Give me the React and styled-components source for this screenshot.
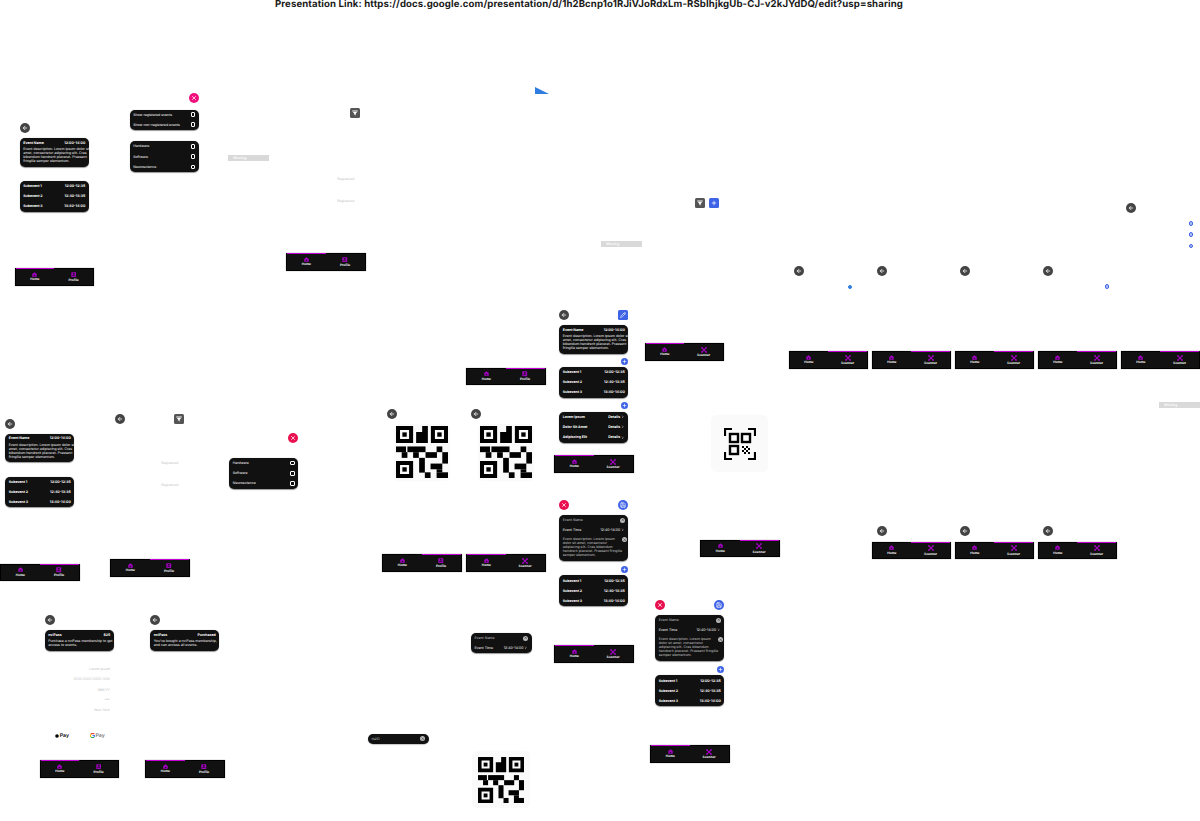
import React from 'react'
import styled, { createGlobalStyle, css } from 'styled-components'
import { ArrowLeft, X, Pencil, Plus, Save, ChevronRight } from 'lucide-react'

const GlobalStyle = createGlobalStyle`
  html, body {
    margin: 0;
    background: #ffffff;
    font-family: 'Inter', 'Liberation Sans', sans-serif;
    text-rendering: geometricPrecision;
    overflow: hidden;
  }
`

// the page is a design board: artboards sit where they were dropped, inside them it's flow
const at = css`
  position: absolute;
  left: ${p => p.$x}px;
  top: ${p => p.$y}px;
`

const Board = styled.div`
  position: relative;
  width: 1200px;
  height: 821px;
  overflow: hidden;
  background: #ffffff;
`

const LinkLine = styled.div`
  ${at}
  font-size: 9.6px;
  line-height: 10px;
  font-weight: 700;
  letter-spacing: 0.115px;
  white-space: nowrap;
  color: #1a1a1a;
`

const Artboard = styled.section`
  ${at}
  display: flex;
  flex-direction: column;
  width: 79.5px;
  height: 172px;
`

const Spot = styled.div`
  ${at}
  width: ${p => (p.$w ? `${p.$w}px` : 'auto')};
`

const Body = styled.div`
  flex: 1;
  display: flex;
  flex-direction: column;
  padding: 0 5.25px;
`

const Header = styled.header`
  display: flex;
  justify-content: space-between;
  align-items: center;
  height: 10px;
  margin-top: ${p => p.$top ?? 9.5}px;
`

const Actions = styled.div`
  display: flex;
  gap: 3.8px;
  margin-left: auto;
`

const Stack = styled.div`
  display: flex;
  flex-direction: column;
  gap: ${p => p.$gap ?? 14.5}px;
  margin-top: ${p => p.$top ?? 5}px;
`

const Card = styled.div`
  box-sizing: border-box;
  padding: ${p => p.$pad || '0 3.5px'};
  background: #111111;
  border-radius: 5px;
  box-shadow: 0 0.5px 1px rgba(0, 0, 0, 0.4);
  color: #ffffff;
  font-size: 3.5px;
`

const Row = styled.div`
  display: flex;
  align-items: center;
  justify-content: space-between;
  height: ${p => p.$h || 10.2}px;
  font-weight: ${p => (p.$bold ? 700 : 400)};
  color: ${p => (p.$dim ? '#c4c4c4' : '#ffffff')};
  white-space: nowrap;
`

const Desc = styled.div`
  line-height: 4px;
  color: ${p => (p.$dim ? '#c4c4c4' : '#f4f4f4')};
  white-space: pre;
`

const DescRow = styled.div`
  display: flex;
  align-items: flex-start;
  justify-content: space-between;
  padding-top: 1.5px;
`

const Value = styled.span`
  display: inline-flex;
  align-items: center;
  gap: 1px;
`

const Check = styled.span`
  flex: none;
  box-sizing: border-box;
  width: 4.6px;
  height: 4.6px;
  border: 0.5px solid #ffffff;
  border-radius: 1px;
`

const Clear = styled.span`
  display: inline-flex;
  flex: none;
  align-items: center;
  justify-content: center;
  width: 5px;
  height: 5px;
  border-radius: 50%;
  background: #b9b9b9;
  color: #222222;
`

const Round = styled.button`
  display: flex;
  flex: none;
  align-items: center;
  justify-content: center;
  width: 10px;
  height: 10px;
  padding: 0;
  border: none;
  border-radius: ${p => (p.$square ? '1.5px' : '50%')};
  background: ${p => p.$bg || '#444444'};
  color: #ffffff;
`

const AddButton = styled(Round)`
  align-self: flex-end;
  width: 7px;
  height: 7px;
  margin: ${p => p.$m};
  background: #3f63e6;
`

const DotColumn = styled.div`
  display: flex;
  flex-direction: column;
  align-self: flex-end;
  gap: 6.6px;
  margin: 8.3px 1.5px 0 0;
`

const Dot = styled.span`
  box-sizing: border-box;
  display: block;
  width: 4.6px;
  height: 4.6px;
  border-radius: 50%;
  background: #b4c2f5;
  border: 1.5px solid #3f63e6;
`

// sits on top of the artboard, it's a hotspot marker and not part of the flow
const Pin = styled(Dot)`
  ${at}
  background: ${p => (p.$solid ? '#2f7de0' : '#b4c2f5')};
  border-color: ${p => (p.$solid ? '#2f7de0' : '#3f63e6')};
`

const Nav = styled.nav`
  display: flex;
  flex: none;
  box-sizing: border-box;
  height: 17.5px;
  background: #111111;
  border: solid #000000;
  border-width: 0 1px 1px 1px;
  box-shadow: 0 0 1px rgba(0, 0, 0, 0.45);
`

const Tab = styled.div`
  flex: 1;
  display: flex;
  flex-direction: column;
  align-items: center;
  gap: 0.6px;
  padding-top: 2.6px;
  box-sizing: border-box;
  border-top: 1.2px solid ${p => (p.$active ? '#c400d8' : '#000000')};
  color: #a200c0;
`

const TabLabel = styled.span`
  font-size: 3.2px;
  line-height: 4px;
  font-weight: 700;
  color: #ffffff;
`

const Tag = styled.div`
  ${at}
  width: 41px;
  height: 6px;
  padding-left: 5px;
  box-sizing: border-box;
  background: #d9d9d9;
  color: #ffffff;
  font-size: 3.3px;
  font-weight: 600;
  line-height: 6px;
`

const FaintList = styled.div`
  display: flex;
  flex-direction: column;
  align-items: flex-end;
  gap: ${p => p.$gap}px;
  margin-top: ${p => p.$top}px;
  padding-right: ${p => p.$right ?? 1}px;
  font-size: 3.4px;
  line-height: 4px;
  color: #c4c4c4;
  white-space: nowrap;
`

const PayRow = styled.div`
  display: flex;
  align-items: center;
  gap: 21px;
  margin-top: 20.5px;
  padding-left: 10.5px;
`

const PayMark = styled.div`
  display: flex;
  align-items: center;
  gap: 0.5px;
  font-size: 5.2px;
  line-height: 6px;
  font-weight: 600;
  color: ${p => p.$color};
`

const CodeBox = styled.div`
  display: flex;
  align-items: center;
  justify-content: center;
  align-self: center;
  flex: none;
  width: ${p => p.$w}px;
  height: ${p => p.$h}px;
  background: #fafafa;
  border-radius: 5px;
`

const Triangle = styled.svg`
  ${at}
`

const HomeIcon = () => (
  <svg width="5" height="5" viewBox="0 0 10 10" fill="currentColor">
    <path d="M5 0.5 9.5 4.2V9.5H0.5V4.2Z" />
    <rect x="3.6" y="5.6" width="2.8" height="2" fill="#111111" />
  </svg>
)

const ProfileIcon = () => (
  <svg width="5.5" height="5.5" viewBox="0 0 10 10" fill="currentColor">
    <rect x="0.5" y="0.5" width="9" height="9" rx="1.2" />
    <rect x="3.4" y="2" width="3.2" height="2.6" fill="#111111" />
    <rect x="2" y="6.2" width="6" height="1.2" fill="#111111" />
  </svg>
)

const ScanIcon = () => (
  <svg width="6" height="6" viewBox="0 0 10 10" fill="none" stroke="currentColor" strokeWidth="2">
    <path d="M1 1 9 9M9 1 1 9" />
    <path d="M0.5 3V0.5H3M7 0.5H9.5V3M9.5 7V9.5H7M3 9.5H0.5V7" strokeWidth="1.2" />
  </svg>
)

const FilterIcon = () => (
  <svg width="6" height="6" viewBox="0 0 10 10" fill="#ffffff">
    <path d="M0.5 1H9.5V2.4H0.5ZM1.6 3.4H8.4L6 6.6V9L4 8V6.6Z" />
  </svg>
)

const Qr = ({ size }) => (
  <svg width={size} height={size} viewBox="0 0 155 155" fill="#000000">
    {[[0, 0], [104, 0], [0, 104]].map(([x, y]) => (
      <g key={`${x}-${y}`}>
        <path fillRule="evenodd" d={`M${x} ${y}h51v51h-51zM${x + 12} ${y + 12}v27h27v-27z`} />
        <rect x={x + 19} y={y + 19} width="13" height="13" />
      </g>
    ))}
    <path d="M78 0H95V51H60V18H78Z" />
    <rect x="0" y="61" width="30" height="17" />
    <rect x="17" y="78" width="17" height="17" />
    <rect x="34" y="61" width="54" height="17" />
    <rect x="51" y="78" width="17" height="17" />
    <rect x="88" y="78" width="34" height="17" />
    <rect x="121" y="61" width="17" height="17" />
    <rect x="138" y="78" width="17" height="34" />
    <rect x="69" y="95" width="17" height="44" />
    <rect x="86" y="138" width="17" height="17" />
    <rect x="103" y="112" width="35" height="17" />
    <rect x="121" y="129" width="17" height="9" />
    <rect x="121" y="138" width="34" height="17" />
  </svg>
)

const ScanQr = () => (
  <svg width="32" height="32" viewBox="0 0 32 32">
    <path d="M1 8V1H8M24 1H31V8M31 24V31H24M8 31H1V24" fill="none" stroke="#000000" strokeWidth="2.2" />
    <g fill="none" stroke="#000000" strokeWidth="2.4">
      <rect x="6" y="6" width="8" height="8" />
      <rect x="18" y="6" width="8" height="8" />
      <rect x="6" y="18" width="8" height="8" />
    </g>
    <g fill="#000000">
      {[[18, 18], [22, 18], [20, 20], [24, 20], [18, 22], [22, 22], [20, 24], [24, 24]].map(([x, y]) => (
        <rect key={`${x}-${y}`} x={x} y={y} width="2" height="2" />
      ))}
    </g>
  </svg>
)

const Back = () => (
  <Round>
    <ArrowLeft size={6} strokeWidth={3} />
  </Round>
)

const Close = ({ bg = '#e8104f' }) => (
  <Round $bg={bg}>
    <X size={6} strokeWidth={3} />
  </Round>
)

const SaveBtn = () => (
  <Round $bg="#3f63e6">
    <Save size={6} strokeWidth={2.5} />
  </Round>
)

const Add = ({ m }) => (
  <AddButton $m={m}>
    <Plus size={5} strokeWidth={3} />
  </AddButton>
)

const FilterBtn = () => (
  <Round $square $bg="#555555">
    <FilterIcon />
  </Round>
)

const BottomNav = ({ active, second }) => (
  <Nav>
    <Tab $active={active === 0}>
      <HomeIcon />
      <TabLabel>Home</TabLabel>
    </Tab>
    <Tab $active={active === 1}>
      {second === 'Profile' ? <ProfileIcon /> : <ScanIcon />}
      <TabLabel>{second}</TabLabel>
    </Tab>
  </Nav>
)

const EventCard = ({ time = '12:00-14:00' }) => (
  <Card $pad="0 3.5px 3.5px">
    <Row $bold $h={9}>
      <span>Event Name</span>
      <span>{time}</span>
    </Row>
    <Desc>
      {'Event description. Lorem ipsum dolor sit\namet, consectetur adipiscing elit. Cras\nbibendum hendrerit placerat. Praesent\nfringilla semper elementum.'}
    </Desc>
  </Card>
)

const SubeventCard = () => (
  <Card $pad="0 3.5px 0.4px">
    <Row $bold>
      <span>Subevent 1</span>
      <span>12:00-12:35</span>
    </Row>
    <Row $bold>
      <span>Subevent 2</span>
      <span>12:40-13:35</span>
    </Row>
    <Row $bold>
      <span>Subevent 3</span>
      <span>13:40-14:00</span>
    </Row>
  </Card>
)

const TopicsCard = () => (
  <Card>
    {['Hardware', 'Software', 'Neuroscience'].map(t => (
      <Row key={t}>
        <span>{t}</span>
        <Check />
      </Row>
    ))}
  </Card>
)

const DetailsCard = () => (
  <Card $pad="0 3.5px 0.4px">
    {['Lorem Ipsum', 'Dolor Sit Amet', 'Adipiscing Elit'].map(t => (
      <Row key={t} $bold>
        <span>{t}</span>
        <Value>
          Details
          <ChevronRight size={3.6} strokeWidth={3} />
        </Value>
      </Row>
    ))}
  </Card>
)

const NameRow = ({ children }) => (
  <Row $dim>
    <span>{children}</span>
    <Clear><X size={3.5} strokeWidth={3} /></Clear>
  </Row>
)

const TimeRow = () => (
  <Row>
    <span>Event Time</span>
    <Value>
      12:40-14:00
      <ChevronRight size={3.6} strokeWidth={3} />
    </Value>
  </Row>
)

const EditCard = () => (
  <Card $pad="0 3.5px 4.6px">
    <NameRow>Event Name</NameRow>
    <TimeRow />
    <DescRow>
      <Desc $dim>
        {'Event description. Lorem ipsum\ndolor sit amet, consectetur\nadipiscing elit. Cras bibendum\nhendrerit placerat. Praesent fringilla\nsemper elementum.'}
      </Desc>
      <Clear><X size={3.5} strokeWidth={3} /></Clear>
    </DescRow>
  </Card>
)

const PassCard = ({ value, children }) => (
  <Card $pad="0 3.5px 3.5px">
    <Row $bold $h={9}>
      <span>nviPass</span>
      <span>{value}</span>
    </Row>
    <Desc>{children}</Desc>
  </Card>
)

const EventScreen = ({ x, y, active }) => (
  <Artboard $x={x} $y={y}>
    <Body>
      <Header><Back /></Header>
      <Stack>
        <EventCard />
        <SubeventCard />
      </Stack>
    </Body>
    <BottomNav active={active} second="Profile" />
  </Artboard>
)

const EditScreen = ({ x, y }) => (
  <Artboard $x={x} $y={y}>
    <Body>
      <Header>
        <Close />
        <SaveBtn />
      </Header>
      <Stack $gap={0}>
        <EditCard />
        <Add m="5px 0 2px" />
        <SubeventCard />
      </Stack>
    </Body>
    <BottomNav active={0} second="Scanner" />
  </Artboard>
)

const QrScreen = ({ x, y, active, second }) => (
  <Artboard $x={x} $y={y}>
    <Body>
      <Header><Back /></Header>
      <Stack $top={4.5}>
        <CodeBox $w={56} $h={57}><Qr size={52} /></CodeBox>
      </Stack>
    </Body>
    <BottomNav active={active} second={second} />
  </Artboard>
)

const RegisteredScreen = ({ x, y, active, top, back }) => (
  <Artboard $x={x} $y={y}>
    <Body>
      <Header $top={9}>
        {back && <Back />}
        <Actions><FilterBtn /></Actions>
      </Header>
      <FaintList $top={top} $gap={18.5} $right={6}>
        <span>Registered</span>
        <span>Registered</span>
      </FaintList>
    </Body>
    <BottomNav active={active} second="Profile" />
  </Artboard>
)

const ScannerScreen = ({ x, y, top, pin, solid, children }) => (
  <Artboard $x={x} $y={y}>
    <Body>
      <Header $top={top}><Back /></Header>
      {children}
    </Body>
    {pin && <Pin $x={pin[0]} $y={pin[1]} $solid={solid} />}
    <BottomNav active={1} second="Scanner" />
  </Artboard>
)

const payFields = ['Lorem ipsum', '0000 0000 0000 1234', 'MM/YY', '***', 'New York']

export default function App() {
  return (
    <Board>
      <GlobalStyle />
      <LinkLine $x={275} $y={0}>
        Presentation Link: https://docs.google.com/presentation/d/1h2Bcnp1o1RJiVJoRdxLm-RSbIhjkgUb-CJ-v2kJYdDQ/edit?usp=sharing
      </LinkLine>

      <Triangle $x={535} $y={87} width="14" height="7" viewBox="0 0 14 7">
        <path d="M0 0 14 7H0Z" fill="#2f7de0" />
      </Triangle>

      <Tag $x={228} $y={155}>Winning</Tag>
      <Tag $x={601} $y={241}>Winning</Tag>
      <Tag $x={1159} $y={402}>Winning</Tag>

      <EventScreen x={14.5} y={113.5} active={0} />

      <Spot $x={124.5} $y={84} $w={79.5}>
        <Body>
          <Header $top={9}>
            <Actions><Close bg="#f0107c" /></Actions>
          </Header>
          <Stack $top={6.5} $gap={11.5}>
            <Card>
              <Row>
                <span>Show registered events</span>
                <Check />
              </Row>
              <Row>
                <span>Show non-registered events</span>
                <Check />
              </Row>
            </Card>
            <TopicsCard />
          </Stack>
        </Body>
      </Spot>

      <RegisteredScreen x={286} y={98.5} active={0} top={59} />
      <RegisteredScreen x={110} y={404.5} active={1} top={37} back />
      <EventScreen x={0} y={409} active={1} />

      <Spot $x={224} $y={424} $w={79.5}>
        <Body>
          <Header $top={9}>
            <Actions><Close /></Actions>
          </Header>
          <Stack $top={15}>
            <TopicsCard />
          </Stack>
        </Body>
      </Spot>

      <Artboard $x={39.5} $y={605.5}>
        <Body>
          <Header><Back /></Header>
          <Stack>
            <PassCard value="$25">
              {'Purchase a nviPass membership to get\naccess to events.'}
            </PassCard>
          </Stack>
          <FaintList $top={16.7} $gap={6.3} $right={4}>
            {payFields.map(t => <span key={t}>{t}</span>)}
          </FaintList>
          <PayRow>
            <PayMark $color="#000000">
              <svg width="4" height="4" viewBox="0 0 10 10"><circle cx="5" cy="5" r="4.5" fill="#000000" /></svg>
              Pay
            </PayMark>
            <PayMark $color="#777777">
              <svg width="5" height="5" viewBox="0 0 10 10" fill="none" strokeWidth="2.2">
                <path d="M8.6 2.4A4.5 4.5 0 0 0 1.6 2.6" stroke="#ea4335" />
                <path d="M1.6 2.6A4.5 4.5 0 0 0 1.6 7.4" stroke="#fbbc04" />
                <path d="M1.6 7.4A4.5 4.5 0 0 0 8 8.4" stroke="#34a853" />
                <path d="M8 8.4C9.2 7.4 9.5 6.2 9.5 5H5" stroke="#4285f4" />
              </svg>
              Pay
            </PayMark>
          </PayRow>
        </Body>
        <BottomNav active={0} second="Profile" />
      </Artboard>

      <Artboard $x={145} $y={605.5}>
        <Body>
          <Header><Back /></Header>
          <Stack>
            <PassCard value="Purchased">
              {"You've bought a nviPass membership,\nand can access all events."}
            </PassCard>
          </Stack>
        </Body>
        <BottomNav active={0} second="Profile" />
      </Artboard>

      <QrScreen x={382} y={399.5} active={1} second="Profile" />
      <QrScreen x={466} y={399.5} active={0} second="Scanner" />

      <Spot $x={471} $y={633} $w={60.5}>
        <Card>
          <NameRow>Event Name</NameRow>
          <TimeRow />
        </Card>
      </Spot>
      <Spot $x={368} $y={733.5} $w={60.5}>
        <Card>
          <NameRow>nUIO</NameRow>
        </Card>
      </Spot>
      <Spot $x={472} $y={751}>
        <CodeBox $w={58} $h={57}><Qr size={46} /></CodeBox>
      </Spot>

      <Artboard $x={554} $y={300.5}>
        <Body>
          <Header $top={9}>
            <Back />
            <Round $square $bg="#3f63e6">
              <Pencil size={6} strokeWidth={2.5} />
            </Round>
          </Header>
          <Stack $top={5.5} $gap={0}>
            <EventCard />
            <Add m="4.5px 0 2px" />
            <SubeventCard />
            <Add m="4.5px 0 2.5px" />
            <DetailsCard />
          </Stack>
        </Body>
        <BottomNav active={0} second="Scanner" />
      </Artboard>

      <EditScreen x={554} y={490.5} />
      <EditScreen x={650} y={590.5} />

      {/* screens where only the chrome shows up */}
      <Artboard $x={466} $y={213}>
        <Body />
        <BottomNav active={1} second="Profile" />
      </Artboard>

      <Artboard $x={644.5} $y={188.5}>
        <Body>
          <Header $top={9}>
            <Actions>
              <FilterBtn />
              <Round $square $bg="#3f63e6">
                <Plus size={6} strokeWidth={3} />
              </Round>
            </Actions>
          </Header>
        </Body>
        <BottomNav active={0} second="Scanner" />
      </Artboard>

      <Artboard $x={700} $y={385}>
        <Body>
          <Stack $top={30}>
            <CodeBox $w={57} $h={57}><ScanQr /></CodeBox>
          </Stack>
        </Body>
        <BottomNav active={1} second="Scanner" />
      </Artboard>

      <ScannerScreen x={788.5} y={196.5} top={69.5} pin={[59.3, 88.3]} solid />
      <ScannerScreen x={871.5} y={196.5} top={69.5} />
      <ScannerScreen x={954.5} y={196.5} top={69.5} />
      <ScannerScreen x={1037.5} y={196.5} top={69.5} pin={[67.3, 87.8]} />
      <ScannerScreen x={1120.5} y={196.5} top={6.5}>
        <DotColumn>
          <Dot />
          <Dot />
          <Dot />
        </DotColumn>
      </ScannerScreen>
      <ScannerScreen x={871.5} y={387} top={139} />
      <ScannerScreen x={954.5} y={387} top={139} />
      <ScannerScreen x={1037.5} y={387} top={139} />
    </Board>
  )
}
